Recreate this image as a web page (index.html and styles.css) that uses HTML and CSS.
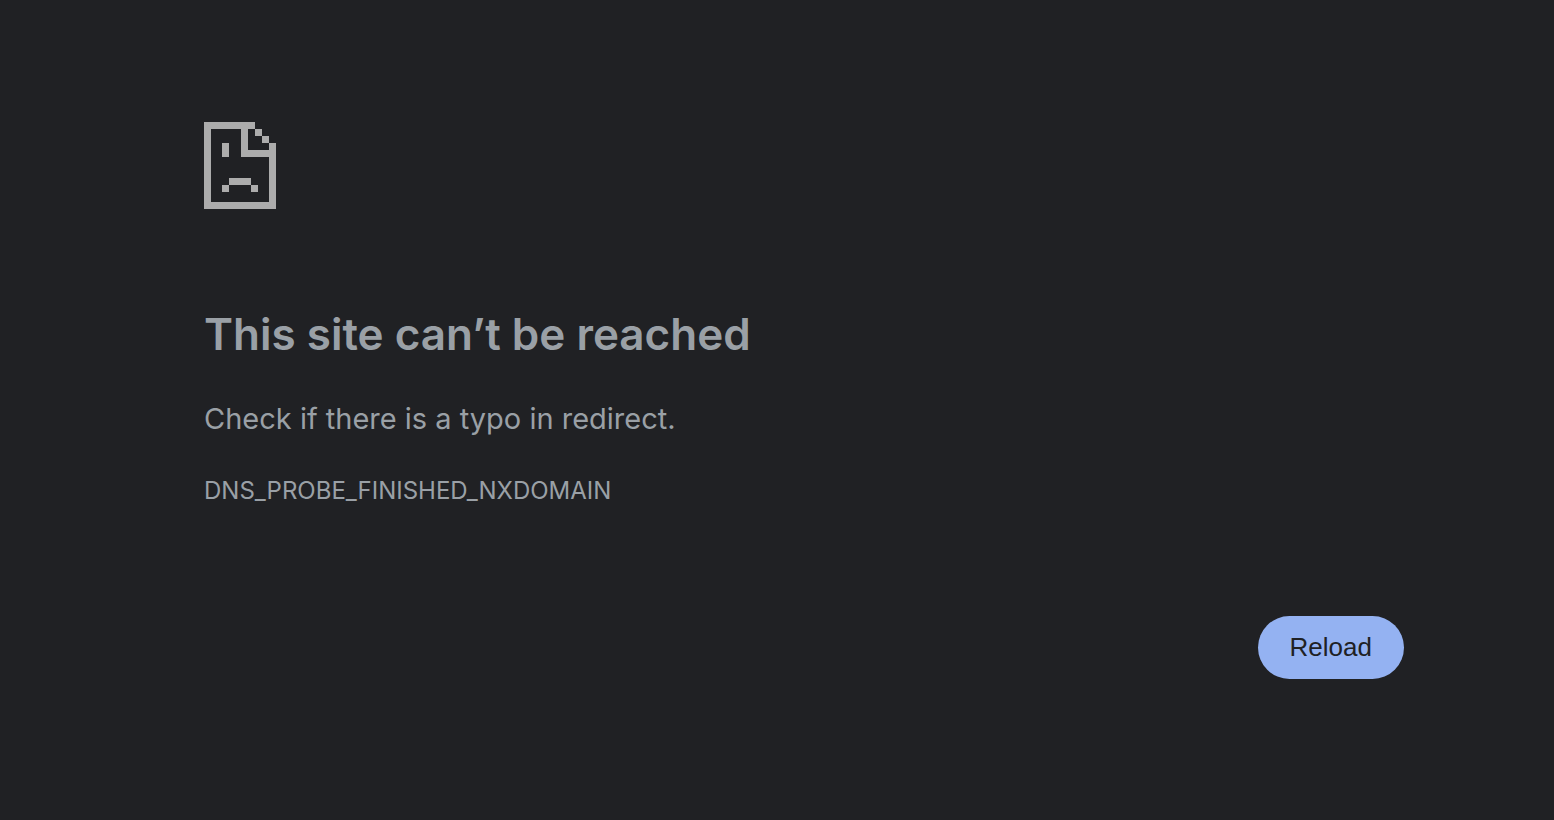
FILE: index.html
```html
<!DOCTYPE html>
<html lang="en">
<head>
<meta charset="utf-8">
<meta name="viewport" content="width=device-width, initial-scale=1">
<title>This site can’t be reached</title>
<link rel="stylesheet" href="styles.css">
</head>
<body>
<main class="error-page">
  <svg class="error-icon" viewBox="0 0 72 87" fill="currentColor" shape-rendering="crispEdges" aria-hidden="true">
    <path d="M0 0H51V7H44V28H65V21H72V87H0ZM7 7V80H65V35H37V7Z" fill-rule="evenodd"/>
    <path d="M51 7h7v7h-7zM58 14h7v7h-7zM18 21h7v14h-7zM25 56h22v7H25zM18 63h7v7h-7zM47 63h7v7h-7z"/>
  </svg>
  <h1 class="error-title">This site can’t be reached</h1>
  <p class="error-summary">Check if there is a typo in redirect.</p>
  <p class="error-code">DNS_PROBE_FINISHED_NXDOMAIN</p>
  <div class="error-actions">
    <button class="reload-button" type="button">Reload</button>
  </div>
</main>
</body>
</html>
```
FILE: styles.css
```css
* {
  box-sizing: border-box;
}

body {
  margin: 0;
  background: #202124;
  color: #9aa0a6;
  font-family: Inter, "Liberation Sans", sans-serif;
}

.error-page {
  display: flex;
  flex-direction: column;
  max-width: 1500px;
  margin: 0 auto;
  padding: 122px 123px 64px 177px;
}

.error-icon {
  width: 72px;
  height: 87px;
  color: #acacac;
}

.error-title {
  margin: 96px 0 32px;
  font-size: 44px;
  font-weight: 600;
  line-height: 58px;
}

.error-summary {
  margin: 0;
  font-size: 29px;
  line-height: 48px;
}

.error-code {
  margin: 24px 0 0;
  font-size: 24px;
  line-height: 48px;
}

.error-actions {
  display: flex;
  justify-content: flex-end;
  margin-top: 101px;
}

.reload-button {
  padding: 16px 32px;
  border: 0;
  border-radius: 32px;
  background: #94b2f2;
  color: #202124;
  font-family: "Liberation Sans", Arial, sans-serif;
  font-size: 26px;
  line-height: 31px;
  cursor: pointer;
}
```
